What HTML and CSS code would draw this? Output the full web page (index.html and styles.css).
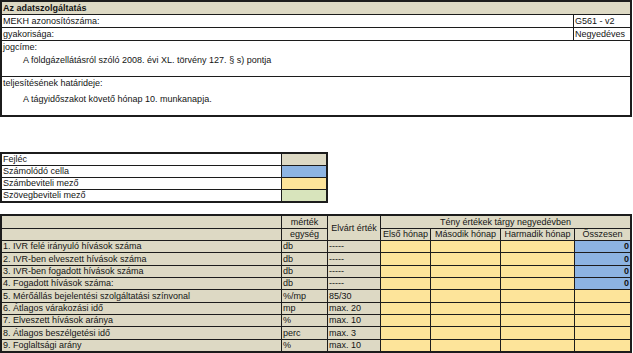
FILE: index.html
```html
<!DOCTYPE html>
<html lang="hu">
<head>
<meta charset="utf-8">
<title>Az adatszolgáltatás</title>
<link rel="stylesheet" href="styles.css">
</head>
<body>
<div class="sheet">
  <div class="info">
    <div class="cell head span2 bold">Az adatszolgáltatás</div>
    <div class="cell">MEKH azonosítószáma:</div>
    <div class="cell">G561 - v2</div>
    <div class="cell">gyakorisága:</div>
    <div class="cell">Negyedéves</div>
    <div class="cell span2 tall">
      <div class="lbl">jogcíme:</div>
      <div class="indent">A földgázellátásról szóló 2008. évi XL. törvény 127. § s) pontja</div>
    </div>
    <div class="cell span2 tall">
      <div class="lbl">teljesítésének határideje:</div>
      <div class="indent deep">A tágyidőszakot követő hónap 10. munkanapja.</div>
    </div>
  </div>

  <div class="legend">
    <div class="cell">Fejléc</div><div class="cell head"></div>
    <div class="cell">Számolódó cella</div><div class="cell calc"></div>
    <div class="cell">Számbeviteli mező</div><div class="cell num"></div>
    <div class="cell">Szövegbeviteli mező</div><div class="cell text"></div>
  </div>

  <div class="data">
    <div class="cell head"></div>
    <div class="cell head center">mérték</div>
    <div class="cell head center mid rows2">Elvárt érték</div>
    <div class="cell head center span4">Tény értékek tárgy negyedévben</div>
    <div class="cell head"></div>
    <div class="cell head center">egység</div>
    <div class="cell head center">Első hónap</div>
    <div class="cell head center">Második hónap</div>
    <div class="cell head center">Harmadik hónap</div>
    <div class="cell head center">Összesen</div>

    <div class="cell head">1. IVR felé irányuló hívások száma</div>
    <div class="cell head">db</div>
    <div class="cell head">-----</div>
    <div class="cell num"></div><div class="cell num"></div><div class="cell num"></div>
    <div class="cell calc right">0</div>

    <div class="cell head">2. IVR-ben elveszett hívások száma</div>
    <div class="cell head">db</div>
    <div class="cell head">-----</div>
    <div class="cell num"></div><div class="cell num"></div><div class="cell num"></div>
    <div class="cell calc right">0</div>

    <div class="cell head">3. IVR-ben fogadott hívások száma</div>
    <div class="cell head">db</div>
    <div class="cell head">-----</div>
    <div class="cell num"></div><div class="cell num"></div><div class="cell num"></div>
    <div class="cell calc right">0</div>

    <div class="cell head">4. Fogadott hívások száma:</div>
    <div class="cell head">db</div>
    <div class="cell head">-----</div>
    <div class="cell num"></div><div class="cell num"></div><div class="cell num"></div>
    <div class="cell calc right">0</div>

    <div class="cell head">5. Mérőállás bejelentési szolgáltatási színvonal</div>
    <div class="cell head">%/mp</div>
    <div class="cell head">85/30</div>
    <div class="cell num"></div><div class="cell num"></div><div class="cell num"></div><div class="cell num"></div>

    <div class="cell head">6. Átlagos várakozási idő</div>
    <div class="cell head">mp</div>
    <div class="cell head">max. 20</div>
    <div class="cell num"></div><div class="cell num"></div><div class="cell num"></div><div class="cell num"></div>

    <div class="cell head">7. Elveszett hívások aránya</div>
    <div class="cell head">%</div>
    <div class="cell head">max. 10</div>
    <div class="cell num"></div><div class="cell num"></div><div class="cell num"></div><div class="cell num"></div>

    <div class="cell head">8. Átlagos beszélgetési idő</div>
    <div class="cell head">perc</div>
    <div class="cell head">max. 3</div>
    <div class="cell num"></div><div class="cell num"></div><div class="cell num"></div><div class="cell num"></div>

    <div class="cell head">9. Foglaltsági arány</div>
    <div class="cell head">%</div>
    <div class="cell head">max. 10</div>
    <div class="cell num"></div><div class="cell num"></div><div class="cell num"></div><div class="cell num"></div>
  </div>
</div>
</body>
</html>
```

FILE: styles.css
```css
* { box-sizing: border-box; }
html, body { margin: 0; padding: 0; background: #ffffff; }
body {
  font-family: "Liberation Sans", Arial, sans-serif;
  font-size: 9px;
  color: #141414;
}
.sheet { width: 633px; }

.info, .legend, .data {
  display: grid;
  gap: 1px;
  padding: 2px;
  background: #1c1c1c;
}
.cell {
  background: #ffffff;
  padding: 0 1px;
  line-height: 12px;
  white-space: nowrap;
  overflow: hidden;
  display: flex;
  align-items: flex-end;
}

.info {
  width: 632px;
  height: 117px;
  grid-template-columns: 571px 56px;
  grid-template-rows: 12px 12px 12px 35px 38px;
}
.span2 { grid-column: span 2; }
.bold { font-weight: bold; }
.tall { flex-direction: column; align-items: stretch; justify-content: flex-start; }
.indent { padding-left: 20px; margin-top: 1px; }
.indent.deep { margin-top: 4px; }

.legend {
  margin-top: 35px;
  width: 328px;
  height: 51px;
  grid-template-columns: 279px 44px;
  grid-template-rows: repeat(4, 1fr);
}

.data {
  margin-top: 11px;
  width: 632px;
  height: 139px;
  grid-template-columns: 279px 45px 52px 49px 69px 73px 55px;
  grid-template-rows: 12px 11px repeat(9, 1fr);
}
.data .cell { line-height: 11px; }
.rows2 { grid-row: span 2; }
.span4 { grid-column: span 4; }
.center { justify-content: center; }
.mid { align-items: center; }
.right { justify-content: flex-end; font-weight: bold; }

.head { background: #ddd9c4; }
.calc { background: #8db4e2; }
.num { background: #fde49a; }
.text { background: #d8e4bc; }
```
